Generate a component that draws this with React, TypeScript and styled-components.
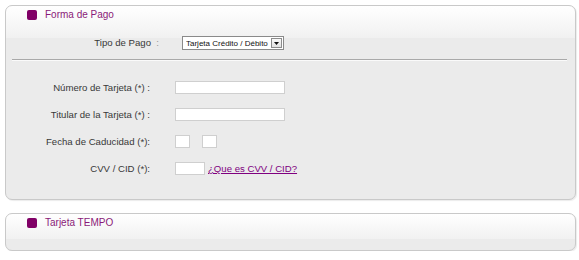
import React from "react";
import styled, { createGlobalStyle } from "styled-components";

const Global = createGlobalStyle`
  html, body { margin: 0; padding: 0; background: #fff; }
  body { font-family: "Liberation Sans", Arial, sans-serif; font-size: 9.6px; color: #383838; }
`;

const Page = styled.div`
  padding: 5px 3px 0 5px;
  width: 571px;
`;

const Panel = styled.section<{ $band: number }>`
  border: 1px solid #c9c9c9;
  border-radius: 7px;
  box-shadow: 1px 1px 1px rgba(0, 0, 0, 0.08);
  background: linear-gradient(#ffffff, #f1f1f1) top / 100% ${(p) => p.$band}px no-repeat, #ebebeb;
  & + & { margin-top: 13px; }
`;

const Header = styled.div`
  display: flex;
  align-items: center;
  height: 17px;
  padding-left: 21px;
`;

const Bullet = styled.span`
  width: 10px;
  height: 10px;
  border-radius: 2px;
  background: #800066;
  margin-right: 8px;
`;

const Title = styled.span`
  color: #8a1a78;
  font-size: 10px;
  line-height: 17px;
`;

const TipoRow = styled.div`
  display: flex;
  align-items: center;
  margin-top: 13px;
  height: 14px;
`;

const TipoLabel = styled.span`
  width: 153px;
  text-align: right;
  margin-right: 23px;
  line-height: 14px;
  white-space: pre;
`;

const Colon = styled.span`
  color: #999;
`;

const FakeSelect = styled.div`
  display: flex;
  align-items: center;
  width: 97px;
  height: 12px;
  border: 1px solid #8a8a8a;
  background: #fff;
  font-size: 8px;
  color: #111;
  padding-left: 3px;
  box-sizing: content-box;
`;

const SelectText = styled.span`
  flex: 1;
  white-space: nowrap;
  overflow: hidden;
`;

const ArrowBtn = styled.span`
  width: 11px;
  height: 10px;
  margin-right: 1px;
  border: 1px solid #8c8c8c;
  background: linear-gradient(#fafafa, #e2e2e2);
  display: flex;
  align-items: center;
  justify-content: center;
  box-sizing: border-box;
`;

const Separator = styled.hr`
  margin: 9px 8px 0 6px;
  border: 0;
  border-top: 1px solid #a9a9a9;
  border-bottom: 1px solid #fafafa;
  height: 0;
`;

const Form = styled.div`
  display: flex;
  flex-direction: column;
  gap: 14px;
  padding: 20px 0 24px 0;
`;

const Row = styled.div`
  display: flex;
  align-items: center;
  height: 13px;
`;

const Label = styled.span`
  width: 144px;
  text-align: right;
  margin-right: 25px;
  white-space: nowrap;
  line-height: 13px;
`;

const Input = styled.span<{ $w: number }>`
  width: ${(p) => p.$w}px;
  height: 13px;
  box-sizing: border-box;
  border: 1px solid #cfcfcf;
  background: #fff;
  & + & { margin-left: 12px; }
`;

const Link = styled.a`
  margin-left: 3px;
  color: #800080;
  text-decoration: underline;
  font-size: 9.6px;
  cursor: pointer;
`;

const Body = styled.div`
  height: 19px;
`;

export default function App() {
  return (
    <>
      <Global />
      <Page>
        <Panel $band={32}>
          <Header>
            <Bullet />
            <Title>Forma de Pago</Title>
          </Header>
          <TipoRow>
            <TipoLabel>
              Tipo de Pago  <Colon>:</Colon>
            </TipoLabel>
            <FakeSelect>
              <SelectText>Tarjeta Crédito / Débito</SelectText>
              <ArrowBtn>
                <svg width="5" height="3" viewBox="0 0 5 3">
                  <path d="M0 0h5L2.5 3z" fill="#111" />
                </svg>
              </ArrowBtn>
            </FakeSelect>
          </TipoRow>
          <Separator />
          <Form>
            <Row>
              <Label>Número de Tarjeta (*) :</Label>
              <Input $w={110} />
            </Row>
            <Row>
              <Label>Titular de la Tarjeta (*) :</Label>
              <Input $w={110} />
            </Row>
            <Row>
              <Label>Fecha de Caducidad (*):</Label>
              <Input $w={15} />
              <Input $w={15} />
            </Row>
            <Row>
              <Label>CVV / CID (*):</Label>
              <Input $w={30} />
              <Link>¿Que es CVV / CID?</Link>
            </Row>
          </Form>
        </Panel>
        <Panel $band={25}>
          <Header>
            <Bullet />
            <Title>Tarjeta TEMPO</Title>
          </Header>
          <Body />
        </Panel>
      </Page>
    </>
  );
}
